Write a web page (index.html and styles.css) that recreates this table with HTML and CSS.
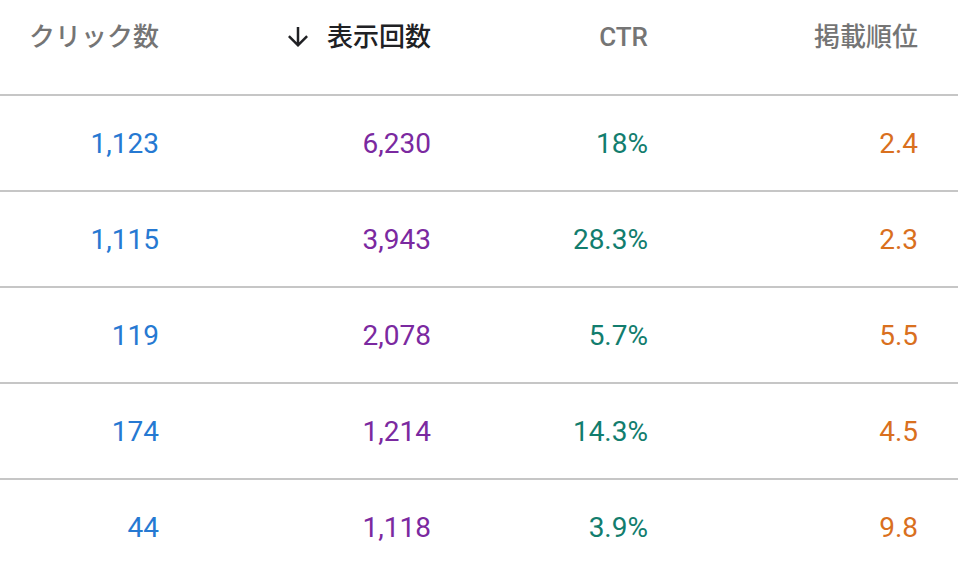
FILE: index.html
```html
<!DOCTYPE html>
<html lang="ja">
<head>
    <meta charset="UTF-8">
    <meta name="viewport" content="width=device-width, initial-scale=1.0">
    <title>検索パフォーマンス</title>
    <link rel="stylesheet" href="styles.css">
</head>
<body>
    <div class="table">
        <div class="row head">
            <div class="cell">クリック数</div>
            <div class="cell active">
                <svg class="sort-icon" viewBox="0 0 24 24"><path d="M20 12l-1.41-1.41L13 16.17V4h-2v12.17l-5.58-5.59L4 12l8 8 8-8z"/></svg>
                表示回数
            </div>
            <div class="cell">CTR</div>
            <div class="cell">掲載順位</div>
        </div>
        <div class="row">
            <div class="cell clicks">1,123</div>
            <div class="cell impressions">6,230</div>
            <div class="cell ctr">18%</div>
            <div class="cell position">2.4</div>
        </div>
        <div class="row">
            <div class="cell clicks">1,115</div>
            <div class="cell impressions">3,943</div>
            <div class="cell ctr">28.3%</div>
            <div class="cell position">2.3</div>
        </div>
        <div class="row">
            <div class="cell clicks">119</div>
            <div class="cell impressions">2,078</div>
            <div class="cell ctr">5.7%</div>
            <div class="cell position">5.5</div>
        </div>
        <div class="row">
            <div class="cell clicks">174</div>
            <div class="cell impressions">1,214</div>
            <div class="cell ctr">14.3%</div>
            <div class="cell position">4.5</div>
        </div>
        <div class="row">
            <div class="cell clicks">44</div>
            <div class="cell impressions">1,118</div>
            <div class="cell ctr">3.9%</div>
            <div class="cell position">9.8</div>
        </div>
    </div>
</body>
</html>
```

FILE: styles.css
```css
body {
    margin: 0;
    background: #fff;
    font-family: Roboto, "Noto Sans CJK JP", sans-serif;
    overflow: hidden;
}
.table {
    width: 958px;
}
.row {
    display: grid;
    grid-template-columns: 199px 272px 217px 270px;
    height: 92px;
    padding-top: 2px;
    align-items: center;
    border-bottom: 2px solid #c6c6c6;
    font-size: 28px;
    line-height: 36px;
}
.row.head {
    align-items: start;
    padding-top: 19px;
    height: 75px;
    font-size: 26px;
    font-weight: 500;
    color: #757575;
}
.cell {
    display: flex;
    justify-content: flex-end;
    align-items: center;
    padding-right: 40px;
    white-space: nowrap;
}
.cell.active {
    color: #202124;
    gap: 14px;
}
.sort-icon {
    width: 30px;
    height: 30px;
    fill: #202124;
}
.clicks {
    color: #2679d2;
}
.impressions {
    color: #7b29a0;
}
.ctr {
    color: #127d6e;
}
.position {
    color: #d9701e;
}
```
